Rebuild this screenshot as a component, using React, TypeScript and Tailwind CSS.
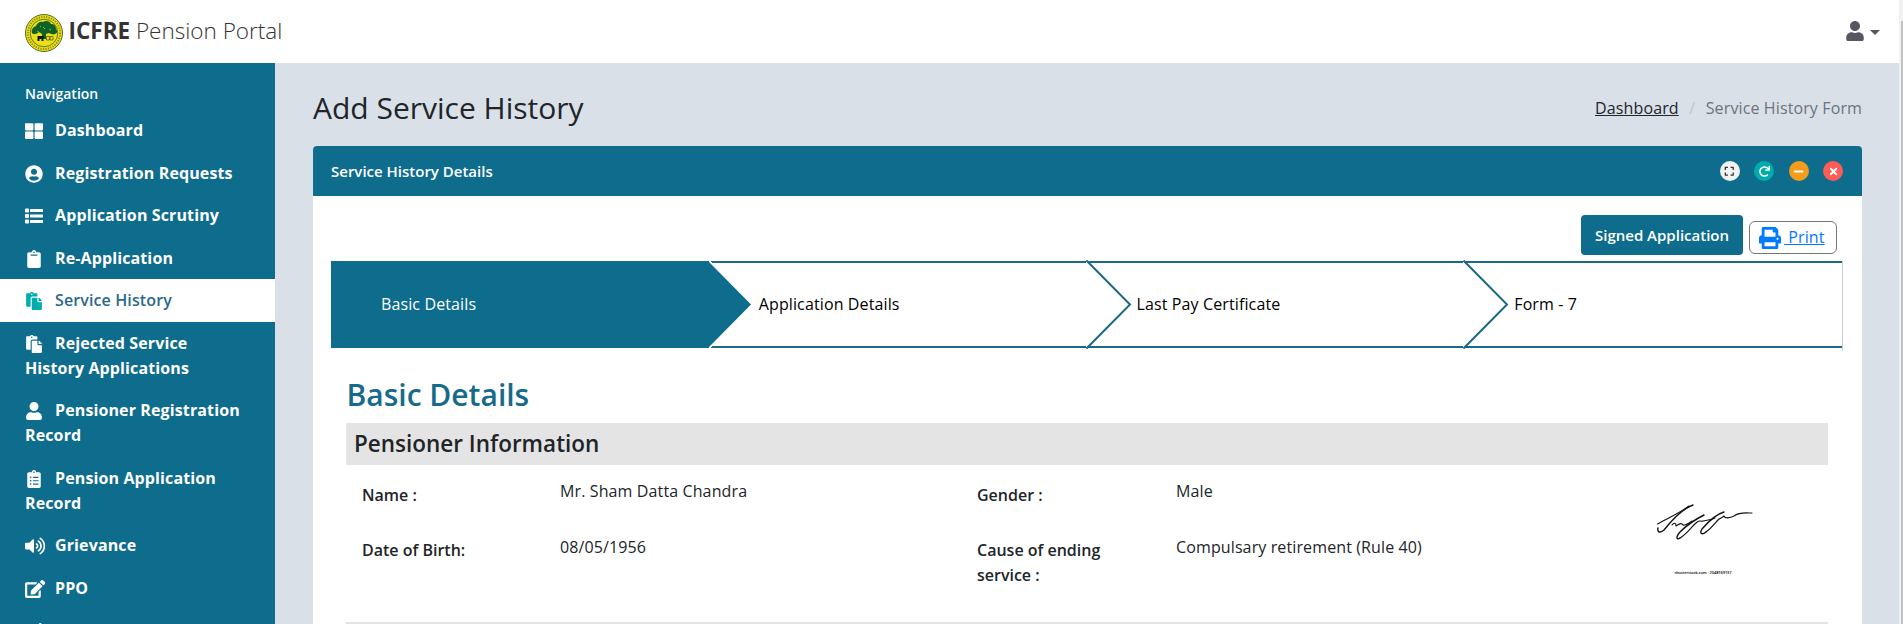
import type { ReactNode } from "react";
import {
  FaThLarge, FaUserCircle, FaClipboard, FaPaste, FaUser, FaClipboardList,
  FaVolumeUp, FaEdit, FaPrint, FaExpand, FaRedo, FaMinus, FaTimes,
} from "react-icons/fa";

function ListIcon() {
  return (
    <svg viewBox="0 0 18 18" className="size-[18px]" fill="currentColor">
      <rect x="0" y="1.500" width="4" height="4" rx="0.800" />
      <rect x="0" y="7" width="4" height="4" rx="0.800" />
      <rect x="0" y="12.500" width="4" height="4" rx="0.800" />
      <rect x="5" y="2" width="13" height="3" rx="0.500" />
      <rect x="5" y="7.500" width="13" height="3" rx="0.500" />
      <rect x="5" y="13" width="13" height="3" rx="0.500" />
    </svg>
  );
}

const navItems: { label: string; icon: ReactNode; active?: boolean }[] = [
  { label: "Dashboard", icon: <FaThLarge /> },
  { label: "Registration Requests", icon: <FaUserCircle /> },
  { label: "Application Scrutiny", icon: <ListIcon /> },
  { label: "Re-Application", icon: <FaClipboard /> },
  { label: "Service History", icon: <FaPaste />, active: true },
  { label: "Rejected Service History Applications", icon: <FaPaste /> },
  { label: "Pensioner Registration Record", icon: <FaUser /> },
  { label: "Pension Application Record", icon: <FaClipboardList /> },
  { label: "Grievance", icon: <FaVolumeUp className="h-[18px] w-[20.25px] shrink-0" /> },
  { label: "PPO", icon: <FaEdit className="h-[18px] w-[20.25px] shrink-0" /> },
  { label: "", icon: <FaEdit className="h-[18px] w-[18px] shrink-0" /> },
];

function Logo() {
  return (
    <svg viewBox="0 0 38 38" className="size-[38px] shrink-0">
      <circle cx="19" cy="19" r="18.5" fill="#e9e01a" stroke="#4a5a1c" strokeWidth="0.9" />
      <circle cx="19" cy="19" r="16.1" fill="none" stroke="#8d8a14" strokeWidth="2" strokeDasharray="1.2 1.3" />
      <circle cx="19" cy="19" r="13.8" fill="#e9e01a" stroke="#4c5a1a" strokeWidth="0.8" />
      <path d="M7 19c-1-3 1-6 4-7 1-3 4-5 7-4 3-2 7-1 8 2 3 0 5 2 5 5 2 2 1 5-1 5-2 1-4 0-6-1l-3 1v5h-4v-5l-3-2c-2 2-6 3-7 1z" fill="#0f6128" />
      <path d="M12 17l2 1M18 13l2 2M24 15l2 1M15 12l1 1" stroke="#b8c41c" strokeWidth="0.8" />
      <path d="M12.500 22h6v5h-2v-2h-2v2h-2z" fill="#11160a" />
      <path d="M21.500 22.500h3v3.500h-3zM25 22.500h3v3.500h-3z" fill="#e9e01a" stroke="#4c4a10" strokeWidth="0.7" />
    </svg>
  );
}

function Signature() {
  return (
    <svg viewBox="0 0 140 110" className="h-[110px] w-[140px]" fill="none" stroke="#111" strokeLinecap="round" strokeLinejoin="round">
      <g strokeWidth="1.1">
        <path d="M17.500 44C28 38 40 33 49 26" />
        <path d="M32 45C34 42 36 43 36 46C40 43 42 43 43 45C45 46 49 43 52 41" />
        <path d="M40 58C48 53 52 46 56 43C60 39 60 42 63 41C67 40 71 40 75 38" />
        <path d="M66 52C72 48 75 43 78 40C80 38 82 38 84 36C85 39 90 38 94 36C99 32 105 33 112 33" />
      </g>
      <g strokeWidth="1.4">
        <path d="M53 25C42 29 32 40 24 50C20 53 17 53 18 48" />
        <path d="M64 35C54 40 46 46 40 52C35 58 37 60 40 58" />
        <path d="M84 32C77 34 68 42 62 49C59 54 62 55 66 52" />
      </g>
    </svg>
  );
}

function Tool({ className, children }: { className: string; children: ReactNode }) {
  return <button className={`flex size-5 items-center justify-center rounded-full text-[11px] ${className}`}>{children}</button>;
}

function Step({ label, current, last }: { label: string; current?: boolean; last?: boolean }) {
  return (
    <li className={`relative flex h-[87px] flex-1 items-center pl-[50px] ${current ? "bg-[#0e6c8d] text-white" : "border-y-2 border-[#1a6985] text-black"}`}>
      {label}
      {!last && (
        <svg className={`absolute z-10 h-[89px] w-[46px] ${current ? "-top-px left-full" : "-top-[3px] left-[calc(100%-1px)]"}`} viewBox="0 0 46 89">
          {current ? (
            <>
              <path d="M0 0H0.500L44.500 44.500 0.500 89H0z" fill="#fff" />
              <path d="M-1 1L42 44.500-1 88z" fill="#0e6c8d" />
            </>
          ) : (
            <>
              <path d="M0 1L43 44.500 0 88z" fill="#fff" />
              <path d="M0.500 0.500L44 44.500 0.500 88.500" fill="none" stroke="#1a6985" strokeWidth="2" />
            </>
          )}
        </svg>
      )}
    </li>
  );
}

export default function App() {
  return (
    <div className="flex h-[624px] w-[1903px] overflow-hidden bg-[#d9e0e7] font-['Open_Sans',sans-serif] text-[16px] leading-[25px] tracking-[0.12px] text-[#212529]">
      <div className="flex min-w-0 flex-1 flex-col">
        <header className="flex h-[63px] shrink-0 items-center justify-between bg-white pr-[19px] pl-[25px]">
          <div className="flex items-center gap-[5.5px] pt-[3px]">
            <Logo />
            <span className="-mt-[5px] text-[22.5px] font-light tracking-normal text-[#333]">
              <b className="text-[22.5px] font-bold">ICFRE</b> Pension Portal
            </span>
          </div>
          <button className="flex items-center gap-[6px] text-[#585663]">
            <FaUser className="-mt-px h-5 w-[18px]" />
            <svg viewBox="0 0 10 5" className="mt-px h-[5px] w-[10px]" fill="currentColor">
              <path d="M0 0h10L5 5z" />
            </svg>
          </button>
        </header>

        <div className="flex min-h-0 flex-1">
          <nav className="w-[275px] shrink-0 overflow-hidden bg-[#0e6c8d] text-white">
            <h2 className="px-[25px] pt-[18px] pb-[3px] text-[14px] font-semibold tracking-normal">Navigation</h2>
            <ul>
              {navItems.map((n, i) => (
                <li key={i} className={`pt-[9px] pr-[30px] pb-[8.5px] pl-[25px] ${n.active ? "bg-white font-semibold text-[#2a6a88]" : "font-bold"}`}>
                  <span className={`inline-flex h-[18px] w-[30px] align-[-4px] text-[18px] ${n.active ? "text-[#00acac]" : ""}`}>
                    <span className={`flex w-[18px] shrink-0 ${i >= 8 ? "justify-start" : "justify-center"}`}>{n.icon}</span>
                  </span>
                  {n.label}
                </li>
              ))}
            </ul>
          </nav>

          <main className="min-w-0 flex-1 pr-[37px] pl-[38px]">
            <div className="flex h-[83px] items-center justify-between pt-[7px]">
              <h1 className="-mt-[2px] text-[30px] font-normal tracking-normal">Add Service History</h1>
              <div className="flex">
                <a className="underline">Dashboard</a>
                <span className="px-[10.5px] text-[#c0c6cc]">/</span>
                <span className="text-[#6c757d]">Service History Form</span>
              </div>
            </div>

            <section className="flex h-[600px] flex-col rounded-t-[4px] bg-white">
              <div className="flex h-[50px] shrink-0 items-center justify-between rounded-t-[4px] bg-[#0e6c8d] pr-[19px] pl-[18px]">
                <h4 className="text-[15px] font-semibold tracking-normal text-white">Service History Details</h4>
                <div className="flex gap-[14.5px]">
                  <Tool className="bg-[#f2f3f4] text-[#333]"><FaExpand className="size-[10.500px]" /></Tool>
                  <Tool className="bg-[#00acac] text-white"><FaRedo /></Tool>
                  <Tool className="bg-[#f59c1a] text-white"><FaMinus /></Tool>
                  <Tool className="bg-[#ff5b57] text-white"><FaTimes /></Tool>
                </div>
              </div>

              <div className="pr-[19px] pl-[18px]">
                <div className="flex h-[65px] items-start justify-end gap-[6px] pt-[19px] pr-[6px]">
                  <button className="h-10 w-[162px] rounded-[4px] bg-[#0e6c8d] text-[15px] font-semibold tracking-normal text-white">Signed Application</button>
                  <button className="mt-[6px] flex h-[33px] w-[88px] items-center rounded-[6px] border border-[#777] pl-[9px] text-[#007bff]">
                    <FaPrint className="size-[22px]" />
                    <span className="ml-[3px] underline whitespace-pre"> Print</span>
                  </button>
                </div>
                <ol className="flex h-[90px] border-r border-[#c8ccce]">
                  <Step label="Basic Details" current />
                  <Step label="Application Details" />
                  <Step label="Last Pay Certificate" />
                  <Step label="Form - 7" last />
                </ol>

                <div className="px-[15px]">
                  <h2 className="mt-[26px] pl-[0.5px] text-[30px] leading-[36px] font-semibold tracking-normal text-[#176b8a]">Basic Details</h2>
                  <h3 className="mt-[10px] flex h-[42px] items-center bg-[#e4e4e4] pb-[2px] pl-[8px] text-[22.5px] font-semibold tracking-normal">Pensioner Information</h3>
                  <div className="flex h-[157px]">
                    <dl className="grid flex-1 grid-cols-[198px_417px_199px_1fr] grid-rows-[55px_1fr] pl-[16px]">
                      <dt className="pt-[18px] font-semibold tracking-normal">Name :</dt>
                      <dd className="pt-[14px]">Mr. Sham Datta Chandra</dd>
                      <dt className="pt-[18px] font-semibold tracking-normal">Gender :</dt>
                      <dd className="pt-[14px]">Male</dd>
                      <dt className="pt-[18px] font-semibold tracking-normal">Date of Birth:</dt>
                      <dd className="pt-[15px]">08/05/1956</dd>
                      <dt className="w-[150px] pt-[18px] font-semibold tracking-normal">Cause of ending service :</dt>
                      <dd className="pt-[15px]">Compulsary retirement (Rule 40)</dd>
                    </dl>
                    <figure className="mt-[15px] mr-[48px] h-[110px] w-[140px]">
                      <Signature />
                      <figcaption className="-mt-[20px] pr-[14px] text-center text-[4px] leading-[5px] font-semibold tracking-[-0.1px] text-black">shutterstock.com · 2048169137</figcaption>
                    </figure>
                  </div>
                  <div className="h-[42px] bg-[#e4e4e4]" />
                </div>
              </div>
            </section>
          </main>
        </div>
      </div>
      <div className="w-1 shrink-0 bg-[#f1f1f1] pt-[21px] pl-[2px]">
        <div className="h-full bg-[#c1c1c1]" />
      </div>
    </div>
  );
}
